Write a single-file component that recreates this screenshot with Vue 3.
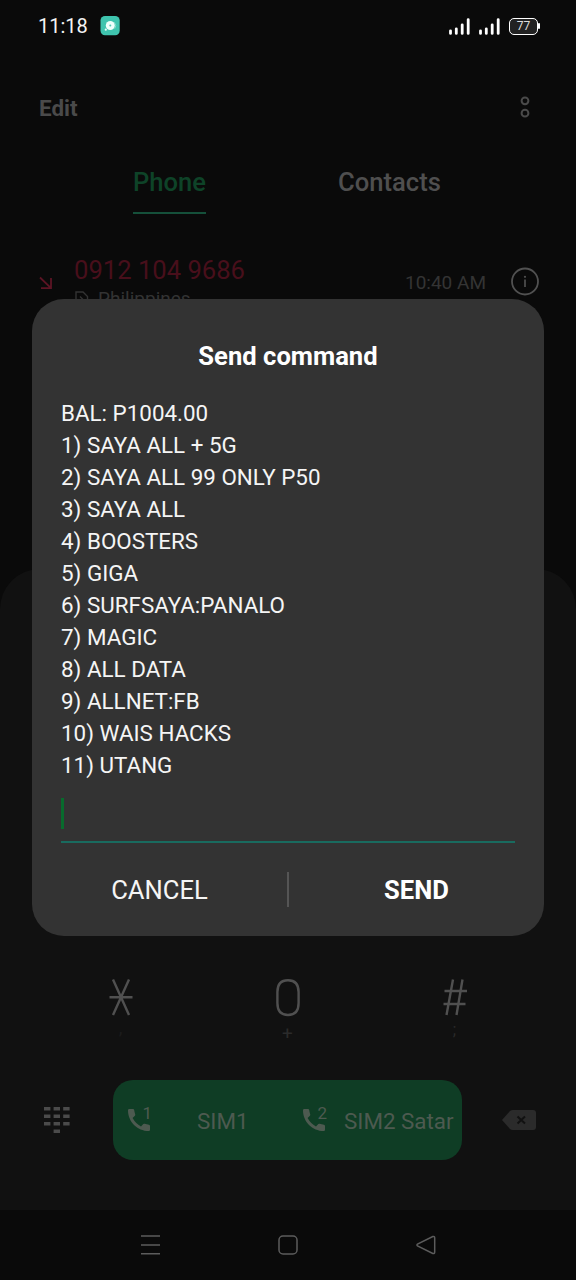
<script setup>
const options = [
  'BAL: P1004.00',
  '1) SAYA ALL + 5G',
  '2) SAYA ALL 99 ONLY P50',
  '3) SAYA ALL',
  '4) BOOSTERS',
  '5) GIGA',
  '6) SURFSAYA:PANALO',
  '7) MAGIC',
  '8) ALL DATA',
  '9) ALLNET:FB',
  '10) WAIS HACKS',
  '11) UTANG',
]
const handset = 'M1 2.2Q1 1 2.2 1H6Q7 1 7.2 2Q7.5 4.300 8.200 6.300Q8.500 7.100 7.900 7.700L5.600 10Q8.500 15.500 14 18.400L16.300 16.100Q16.900 15.500 17.700 15.800Q19.700 16.500 22 16.800Q23 17 23 18V21.800Q23 23 21.800 23C10.300 23 1 13.700 1 2.200Z'
const dialKeys = [0, 1, 2].flatMap((r) => [0, 1, 2].map((c) => [c, r])).concat([[1, 3]])
</script>

<template>
  <div class="screen">
    <header class="status">
      <span class="clock">11:18</span>
      <svg class="app-badge" width="20" height="20" viewBox="0 0 20 20">
        <rect x="0.500" y="0" width="19.200" height="19.200" rx="4.500" fill="#3fc4ae" />
        <path d="M14.500 6.500q2.500 3.200.2 6.200" fill="none" stroke="#83ddcb" stroke-width="1" />
        <circle cx="10.300" cy="9.500" r="4.500" fill="#effffb" />
        <circle cx="10.300" cy="9.500" r="1" fill="#54c7b5" />
        <circle cx="5.800" cy="13.700" r="1.100" fill="#e8fffa" />
      </svg>
      <div class="indicators">
        <svg v-for="n in 2" :key="n" class="signal" width="21" height="17" viewBox="0 0 21 17">
          <path d="M1.500 12.800V15.400M7.300 10.800V15.400M13.200 6.800V15.400M19.200 1.600V15.400" stroke="#fff" stroke-width="2.800" stroke-linecap="round" />
        </svg>
        <div class="battery">77</div>
      </div>
    </header>

    <div class="toolbar">
      <span>Edit</span>
      <svg width="12" height="24" viewBox="0 0 12 24" fill="none" stroke="#4a4a4a" stroke-width="2">
        <circle cx="6" cy="5.800" r="3.400" />
        <circle cx="6" cy="18.200" r="3.400" />
      </svg>
    </div>

    <nav class="tabs">
      <span class="tab active">Phone</span>
      <span class="tab">Contacts</span>
    </nav>

    <section class="log">
      <svg class="missed" width="14" height="14" viewBox="0 0 14 14" fill="none" stroke="#5c1424" stroke-width="1.800">
        <path d="M1 1.500L12 12.200M12 2V12.200H2" />
      </svg>
      <div class="caller">
        <div class="number">0912 104 9686</div>
        <div class="place">
          <svg width="14" height="16" viewBox="0 0 14 16" fill="none" stroke="#333" stroke-width="1.400">
            <path d="M1 15V1H8L12.500 5.500V15ZM5 5.500L8 8.500V12" />
          </svg>
          <span>Philippines</span>
        </div>
      </div>
      <span class="time">10:40 AM</span>
      <svg width="30" height="30" viewBox="0 0 30 30">
        <circle cx="15" cy="14.500" r="13" fill="none" stroke="#515151" stroke-width="1.800" />
        <circle cx="15" cy="9.800" r="1.100" fill="#515151" />
        <path d="M15 12.500V20" stroke="#515151" stroke-width="1.700" />
      </svg>
    </section>

    <section class="dialer">
      <div class="keys">
        <div class="key">
          <svg width="24" height="37" viewBox="0 0 24 37" fill="none" stroke="#505050" stroke-width="2.400">
            <path d="M4 .500L20 36M20 .500L4 36M.500 18.300H23.500" />
          </svg>
          <span class="sub faint">,</span>
        </div>
        <div class="key">
          <svg width="24" height="38" viewBox="0 0 24 38" fill="none" stroke="#505050" stroke-width="2.400">
            <path d="M12 1.200C19 1.200 22.600 5.500 22.600 13V24C22.600 31.500 19 36 12 36S1.400 31.500 1.400 24V13C1.400 5.500 5 1.200 12 1.200Z" />
          </svg>
          <span class="sub">+</span>
        </div>
        <div class="key">
          <svg width="24" height="37" viewBox="0 0 24 37" fill="none" stroke="#505050" stroke-width="2.400">
            <path d="M10 .500L3.500 36M19.500 .500L13.500 36M1.500 12H24M.500 25H22.500" />
          </svg>
          <span class="sub semi">;</span>
        </div>
      </div>
      <div class="actions">
        <svg class="pad" width="28" height="28" viewBox="0 0 28 28" fill="#4b4b4b">
          <rect v-for="([c, r], i) in dialKeys" :key="i" :x="1 + c * 9.6" :y="1 + r * 7.5" width="6.400" height="3.500" />
        </svg>
        <div class="call">
          <div class="sim first">
            <span class="phone-icon">
              <svg width="24" height="24" viewBox="0 0 24 24"><path :d="handset" fill="#4d5a50" /></svg>
              <i>1</i>
            </span>
            <span class="sim-name">SIM1</span>
          </div>
          <div class="sim second">
            <span class="phone-icon">
              <svg width="24" height="24" viewBox="0 0 24 24"><path :d="handset" fill="#4d5a50" /></svg>
              <i>2</i>
            </span>
            <span class="sim-name">SIM2 Satar</span>
          </div>
        </div>
        <svg class="erase" width="36" height="22" viewBox="0 0 36 22">
          <path d="M1 11L9 2Q10.200 1 12 1H32Q35 1 35 4V18Q35 21 32 21H12Q10.200 21 9 20Z" fill="#2b2b2b" />
          <path d="M16.500 7.500L24 14.500M24 7.500L16.500 14.500" stroke="#111" stroke-width="2" />
        </svg>
      </div>
    </section>

    <footer class="navbar">
      <svg width="20" height="20" viewBox="0 0 20 20" stroke="#5c5c5c" stroke-width="1.500">
        <path d="M0 1H19M0 10H19M0 18.700H19" />
      </svg>
      <svg width="20" height="20" viewBox="0 0 20 20" fill="none" stroke="#5c5c5c" stroke-width="1.500">
        <rect x="1" y="1" width="18" height="18" rx="4" />
      </svg>
      <svg width="20" height="20" viewBox="0 0 20 20" fill="none" stroke="#5c5c5c" stroke-width="1.500">
        <path d="M1.500 9Q.500 10 1.500 11L16.800 18.500Q18.700 19 18.700 17V3Q18.700 1 16.800 1.500Z" />
      </svg>
    </footer>

    <div class="dialog">
      <h1>Send command</h1>
      <ul>
        <li v-for="o in options" :key="o">{{ o }}</li>
      </ul>
      <div class="field"><span class="caret"></span></div>
      <div class="buttons">
        <span class="button">CANCEL</span>
        <span class="divider"></span>
        <span class="button strong">SEND</span>
      </div>
    </div>
  </div>
</template>

<style>
body {
  background: #0a0a0a;
}
</style>

<style scoped>
.screen {
  position: relative;
  display: flex;
  flex-direction: column;
  width: 576px;
  height: 1280px;
  overflow: hidden;
  background: #0a0a0a;
  font-family: Roboto, "Liberation Sans", sans-serif;
}
svg {
  display: block;
  flex: none;
}
.status {
  display: flex;
  align-items: center;
  height: 52px;
  padding: 0 36px 0 38px;
  box-sizing: border-box;
}
.clock {
  width: 62px;
  color: #f4f4f4;
  font-size: 20px;
}
.indicators {
  display: flex;
  align-items: center;
  gap: 9px;
  margin-left: auto;
}
.battery {
  position: relative;
  width: 29px;
  height: 17px;
  margin-right: 2px;
  box-sizing: border-box;
  border: 1.500px solid #fff;
  border-radius: 5px;
  background: #222;
  color: #ddd;
  font-size: 12px;
  line-height: 15px;
  text-align: center;
}
.battery::after {
  content: "";
  position: absolute;
  top: 4px;
  right: -3px;
  width: 2px;
  height: 6px;
  border-radius: 1px;
  background: #fff;
}
.toolbar {
  display: flex;
  align-items: center;
  justify-content: space-between;
  height: 110px;
  padding: 0 45px 0 39px;
  color: #4a4a4a;
  font-size: 22.400px;
  font-weight: 700;
}
.toolbar span {
  padding-top: 2px;
}
.tabs {
  display: grid;
  grid-template-columns: 220px 220px;
  height: 53px;
  padding-left: 59.500px;
}
.tab {
  justify-self: center;
  height: 52px;
  padding-top: 5px;
  box-sizing: border-box;
  color: #4f4f4f;
  font-size: 25.600px;
  font-weight: 500;
  line-height: 30px;
}
.tab.active {
  color: #0e4328;
  border-bottom: 2px solid #15503a;
}
.log {
  display: flex;
  align-items: center;
  height: 102px;
  padding: 16px 36px 0 39px;
}
.missed {
  margin: 2px 21px 0 0;
}
.caller {
  padding-bottom: 1px;
}
.number {
  color: #480f1b;
  font-size: 25.600px;
  line-height: 34px;
}
.place {
  display: flex;
  align-items: center;
  gap: 9px;
  padding-left: 1px;
  color: #333;
  font-size: 19px;
  line-height: 24px;
}
.time {
  margin: 0 24px 0 auto;
  color: #343434;
  font-size: 19px;
}
.dialer {
  display: flex;
  flex-direction: column;
  justify-content: flex-end;
  height: 641px;
  margin-top: auto;
  border-radius: 40px 40px 0 0;
  background: #111;
}
.keys {
  display: grid;
  grid-template-columns: repeat(3, 167px);
  padding-left: 37px;
  margin-bottom: 39px;
}
.key {
  display: flex;
  flex-direction: column;
  align-items: center;
  justify-content: space-between;
  height: 62px;
}
.sub {
  color: #2b2b2b;
  font-size: 19px;
  line-height: 15px;
}
.semi {
  padding-bottom: 4px;
  font-size: 16px;
}
.faint {
  padding-bottom: 6px;
  color: #1c1c1c;
}
.actions {
  display: flex;
  align-items: center;
  height: 80px;
  padding: 0 39px 0 43px;
  margin-bottom: 50px;
}
.call {
  display: flex;
  align-items: center;
  width: 349px;
  height: 80px;
  margin: 0 auto 0 42px;
  border-radius: 20px;
  background: #0f3d25;
  color: #4d5a50;
}
.sim {
  display: flex;
  align-items: center;
}
.sim.first {
  width: 189px;
  padding-left: 14px;
  box-sizing: border-box;
}
.sim.first .sim-name {
  margin-left: 46px;
}
.sim.second .sim-name {
  margin-left: 18px;
}
.sim-name {
  padding-top: 2px;
  font-size: 22.400px;
  white-space: nowrap;
}
.phone-icon {
  position: relative;
}
.phone-icon i {
  position: absolute;
  top: -4px;
  right: -1px;
  font-size: 17px;
  font-style: normal;
  line-height: 18px;
}
.navbar {
  display: grid;
  grid-template-columns: repeat(3, 137.500px);
  place-content: center;
  justify-items: center;
  height: 70px;
}
.dialog {
  position: absolute;
  left: 32px;
  top: 299px;
  display: flex;
  flex-direction: column;
  width: 512px;
  height: 637px;
  padding: 41px 29px 0;
  box-sizing: border-box;
  border-radius: 32px;
  background: #333;
  color: #f5f5f5;
}
h1 {
  margin: 0;
  color: #fff;
  font-size: 25.600px;
  font-weight: 700;
  line-height: 32px;
  text-align: center;
}
ul {
  margin: 25px 0 0;
  padding: 0;
  list-style: none;
}
li {
  font-size: 22.400px;
  line-height: 32px;
  white-space: nowrap;
}
.field {
  height: 62px;
  padding-top: 17px;
  box-sizing: border-box;
  border-bottom: 2px solid #196b5f;
}
.caret {
  display: block;
  width: 3px;
  height: 31px;
  background: #086b2d;
}
.buttons {
  display: grid;
  grid-template-columns: 255px 2px 255px;
  align-items: center;
  height: 93px;
  margin: 0 -29px;
  font-size: 25.600px;
  text-align: center;
}
.divider {
  height: 35px;
  background: #555;
}
.strong {
  color: #fff;
  font-weight: 700;
}
</style>
